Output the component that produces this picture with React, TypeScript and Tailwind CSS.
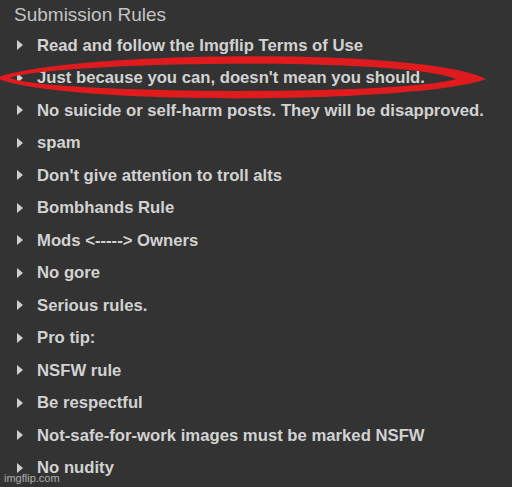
import React from 'react';

const rules = [
  'Read and follow the Imgflip Terms of Use',
  "Just because you can, doesn't mean you should.",
  'No suicide or self-harm posts. They will be disapproved.',
  'spam',
  "Don't give attention to troll alts",
  'Bombhands Rule',
  'Mods <-----> Owners',
  'No gore',
  'Serious rules.',
  'Pro tip:',
  'NSFW rule',
  'Be respectful',
  'Not-safe-for-work images must be marked NSFW',
  'No nudity',
];

function Caret() {
  return (
    <svg width="6" height="10" viewBox="0 0 6 10" className="shrink-0">
      <path d="M0 0 L6 5 L0 10 Z" fill="#cfcfcf" />
    </svg>
  );
}

export default function App() {
  return (
    <div
      className="relative w-[512px] h-[487px] overflow-hidden bg-[#333333]"
      style={{ fontFamily: '"Liberation Sans", Arial, sans-serif' }}
    >
      <div className="pl-[14px] h-[29px] leading-[29px] text-[19px] text-[#c4c4c4]">Submission Rules</div>
      <ul>
        {rules.map((r) => (
          <li key={r} className="flex items-center h-[32.5px] pl-[17px]">
            <Caret />
            <span className="ml-[14px] text-[16.7px] font-bold text-[#d2d2d2] whitespace-nowrap">{r}</span>
          </li>
        ))}
      </ul>

      {/* red marker ellipse drawn over the second rule */}
      <svg className="absolute left-0 top-0 pointer-events-none" width="512" height="487">
        <path
          fillRule="evenodd"
          fill="#e01b1e"
          d="M-4 78 C 60 52, 420 46, 486 79 C 420 104, 60 106, -4 78 Z M 10 78 C 50 62, 400 56, 456 79 C 400 96, 50 94, 10 78 Z"
        />
      </svg>

      <div className="absolute left-[4px] bottom-[3px] text-[11px] leading-none text-white/60">imgflip.com</div>
    </div>
  );
}
